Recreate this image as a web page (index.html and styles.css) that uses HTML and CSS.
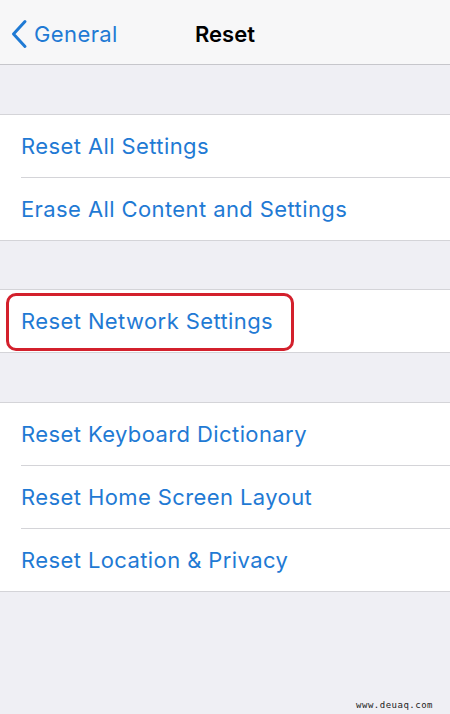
FILE: index.html
```html
<!DOCTYPE html>
<html lang="en">
  <head>
    <meta charset="UTF-8">
    <meta name="viewport" content="width=device-width, initial-scale=1.0">
    <title>Reset</title>
    <link rel="stylesheet" href="styles.css">
  </head>
  <body>
    <header class="navbar">
      <a class="back" href="#">
        <svg class="chevron" width="18" height="30" viewBox="0 0 18 30">
          <path d="M15 2.5 L3.5 15 L15 27.5" fill="none" stroke="currentColor" stroke-width="3" stroke-linecap="round" stroke-linejoin="round"/>
        </svg>
        <span>General</span>
      </a>
      <h1>Reset</h1>
    </header>

    <main class="groups">
      <section class="group">
        <div class="row">Reset All Settings</div>
        <div class="row">Erase All Content and Settings</div>
      </section>
      <section class="group">
        <div class="row highlighted">Reset Network Settings</div>
      </section>
      <section class="group last">
        <div class="row">Reset Keyboard Dictionary</div>
        <div class="row">Reset Home Screen Layout</div>
        <div class="row">Reset Location &amp; Privacy</div>
      </section>
    </main>

    <footer class="watermark">www.deuaq.com</footer>
  </body>
</html>
```

FILE: styles.css
```css
body { margin: 0; background: #efeff4; font-family: Inter, "Liberation Sans", sans-serif; height: 714px; position: relative; overflow: hidden; }
.navbar { height: 64px; background: #f7f7f8; border-bottom: 1px solid #c6c6cb; display: flex; align-items: center; position: relative; }
.back { display: flex; align-items: center; gap: 6px; color: #1f7ad4; text-decoration: none; font-size: 22px; letter-spacing: 0.4px; padding-left: 10px; margin-top: 4px; }
.chevron { display: block; }
.navbar h1 { position: absolute; left: 0; right: 0; top: 0; margin: 0; line-height: 68px; text-align: center; font-size: 22px; font-weight: 600; color: #000; }
.groups { display: flex; flex-direction: column; gap: 48px; padding-top: 49px; }
.group { background: #fff; border-top: 1px solid #d4d4d8; border-bottom: 1px solid #d4d4d8; }
.group.last { margin-top: 1px; }
.row { height: 62px; line-height: 62px; padding-left: 21px; font-size: 22px; letter-spacing: 0.4px; color: #1f7ad4; position: relative; }
.row + .row { border-top: 1px solid #d4d4d8; margin-left: 21px; padding-left: 0; }
.highlighted::after { content: ""; position: absolute; left: 6px; top: 3px; width: 282px; height: 52px; border: 3px solid #d3202c; border-radius: 10px; }
.watermark { position: absolute; right: 17px; bottom: 4px; font-family: "DejaVu Sans Mono", monospace; font-size: 9px; color: #222; letter-spacing: 0.5px; }
```
